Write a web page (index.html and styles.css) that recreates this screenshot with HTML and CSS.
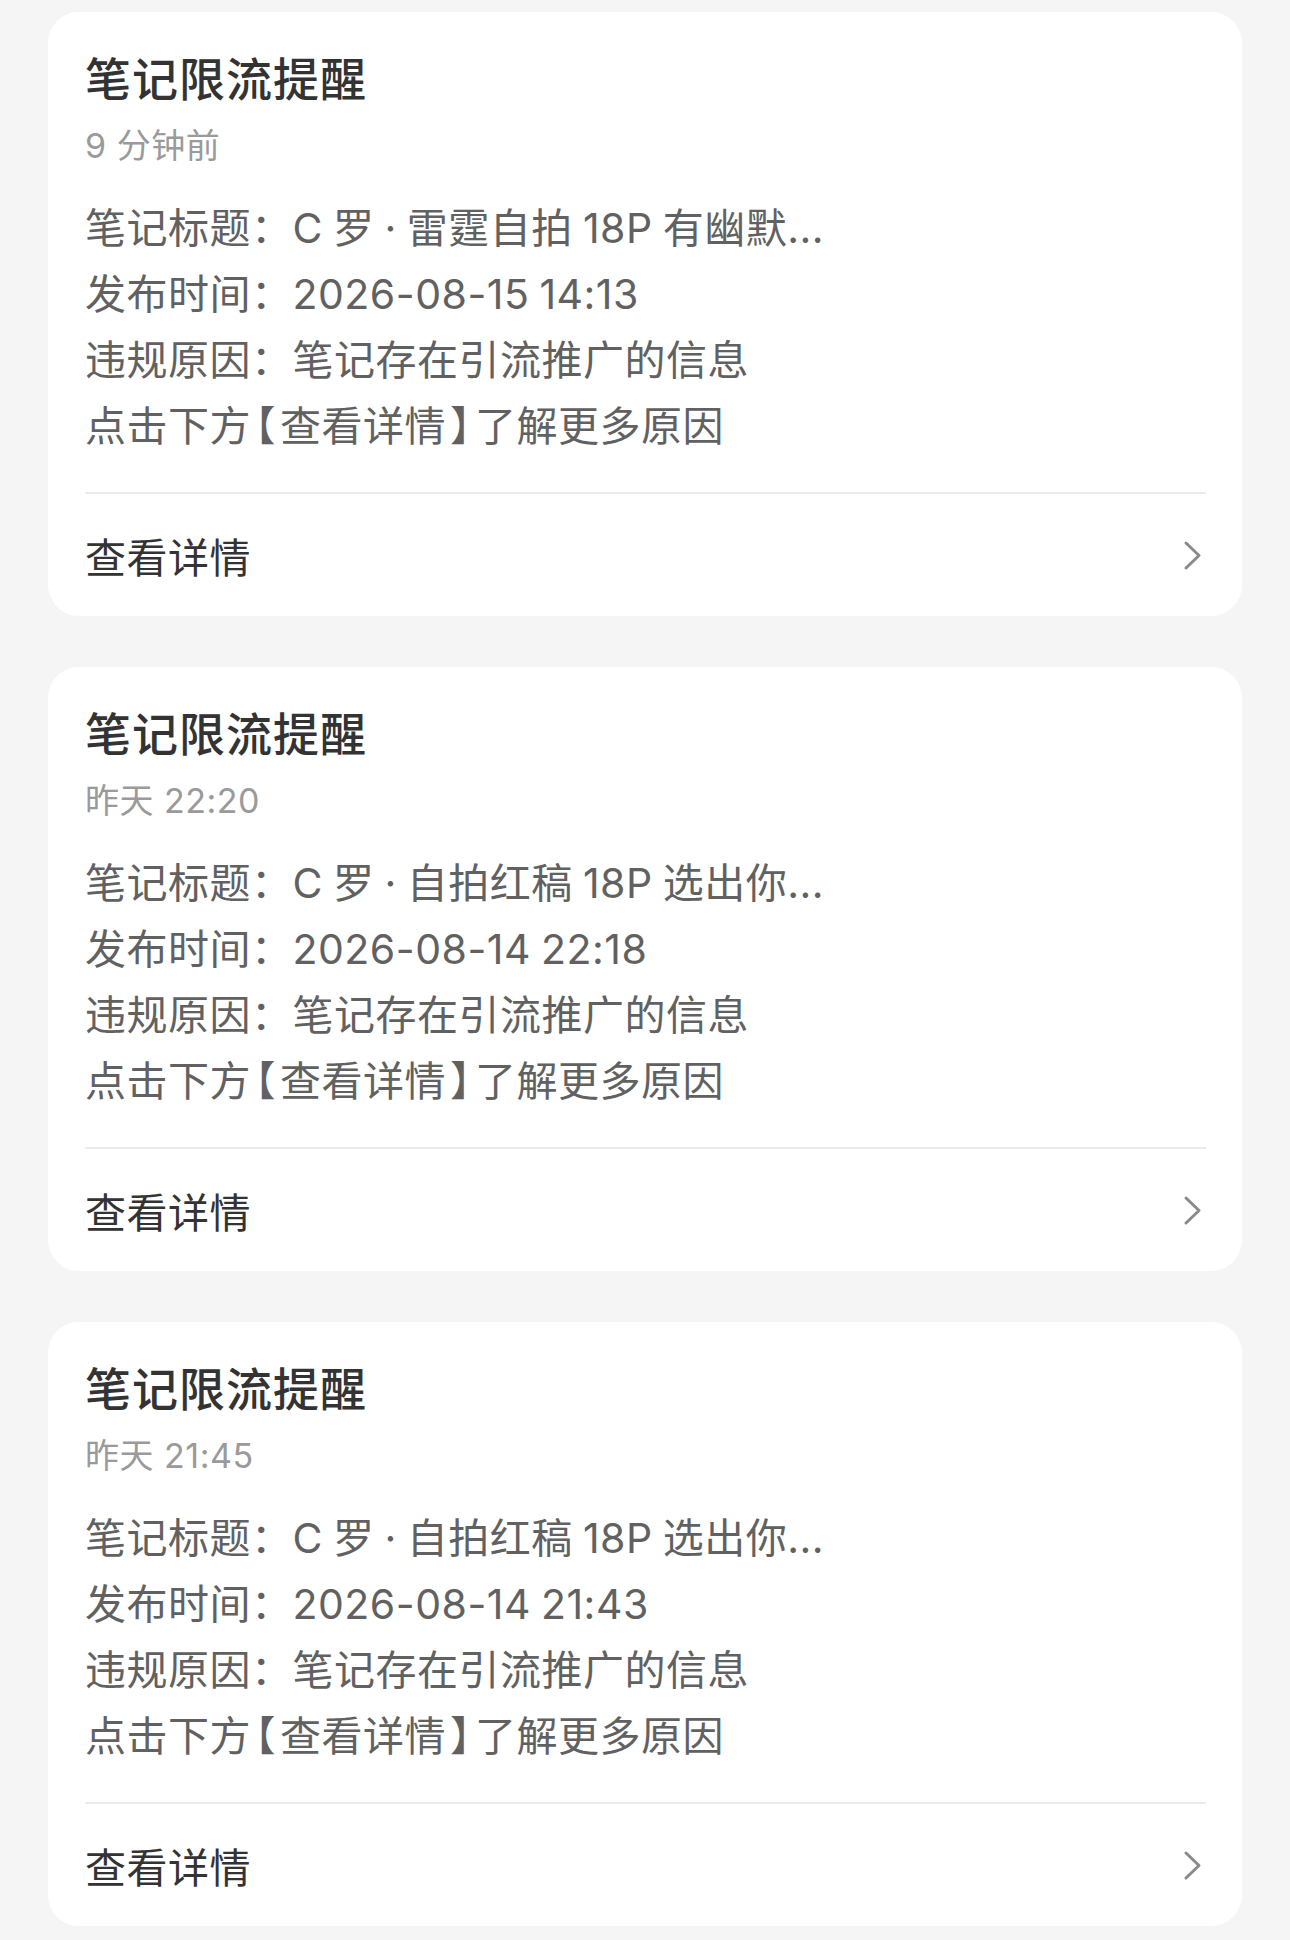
FILE: index.html
```html
<!DOCTYPE html>
<html lang="zh-CN">
<head>
<meta charset="utf-8">
<title>通知</title>
<link rel="stylesheet" href="styles.css">
</head>
<body>
<main class="list">
  <section class="card">
    <h2 class="title">笔记限流提醒</h2>
    <div class="time">9 分钟前</div>
    <div class="body">
      <p class="line">笔记标题：C 罗 · 雷霆自拍 18P 有幽默...</p>
      <p class="line">发布时间：2026-08-15 14:13</p>
      <p class="line">违规原因：笔记存在引流推广的信息</p>
      <p class="line">点击下方<span class="br">【</span>查看详情<span class="br">】</span>了解更多原因</p>
    </div>
    <div class="divider"></div>
    <a class="detail" href="#">
      <span>查看详情</span>
      <svg class="chev" viewBox="0 0 19 31" width="19" height="31"><polyline points="3,3 16,15.5 3,28" fill="none" stroke="#8a8a8a" stroke-width="3" stroke-linecap="round" stroke-linejoin="round"/></svg>
    </a>
  </section>
  <section class="card">
    <h2 class="title">笔记限流提醒</h2>
    <div class="time">昨天 22:20</div>
    <div class="body">
      <p class="line">笔记标题：C 罗 · 自拍红稿 18P 选出你...</p>
      <p class="line">发布时间：2026-08-14 22:18</p>
      <p class="line">违规原因：笔记存在引流推广的信息</p>
      <p class="line">点击下方<span class="br">【</span>查看详情<span class="br">】</span>了解更多原因</p>
    </div>
    <div class="divider"></div>
    <a class="detail" href="#">
      <span>查看详情</span>
      <svg class="chev" viewBox="0 0 19 31" width="19" height="31"><polyline points="3,3 16,15.5 3,28" fill="none" stroke="#8a8a8a" stroke-width="3" stroke-linecap="round" stroke-linejoin="round"/></svg>
    </a>
  </section>
  <section class="card">
    <h2 class="title">笔记限流提醒</h2>
    <div class="time">昨天 21:45</div>
    <div class="body">
      <p class="line">笔记标题：C 罗 · 自拍红稿 18P 选出你...</p>
      <p class="line">发布时间：2026-08-14 21:43</p>
      <p class="line">违规原因：笔记存在引流推广的信息</p>
      <p class="line">点击下方<span class="br">【</span>查看详情<span class="br">】</span>了解更多原因</p>
    </div>
    <div class="divider"></div>
    <a class="detail" href="#">
      <span>查看详情</span>
      <svg class="chev" viewBox="0 0 19 31" width="19" height="31"><polyline points="3,3 16,15.5 3,28" fill="none" stroke="#8a8a8a" stroke-width="3" stroke-linecap="round" stroke-linejoin="round"/></svg>
    </a>
  </section>
</main>
</body>
</html>
```
FILE: styles.css
```css
html, body {
  margin: 0;
  padding: 0;
  background: #f5f5f5;
}
body {
  font-family: "Inter", "Noto Sans CJK SC", "Noto Sans", sans-serif;
  width: 1290px;
  min-height: 1940px;
}
.list {
  display: flex;
  flex-direction: column;
  gap: 51px;
  padding: 12px 48px 15px 48px;
}
.card {
  background: #ffffff;
  border-radius: 31px;
  padding: 37px 36px 0 37px;
  height: 604px;
  box-sizing: border-box;
  display: flex;
  flex-direction: column;
}
.title {
  margin: 0;
  font-size: 46px;
  line-height: 60px;
  font-weight: 500;
  color: #333333;
  letter-spacing: 1px;
}
.time {
  margin-top: 15px;
  font-size: 34px;
  line-height: 44px;
  color: #9a9a9a;
  letter-spacing: 0.5px;
}
.body {
  margin-top: 27px;
}
.line {
  margin: 0;
  font-size: 41px;
  line-height: 66px;
  color: #616161;
  letter-spacing: 0.5px;
  word-spacing: -2px;
  white-space: nowrap;
}
.br {
  font-feature-settings: "halt";
  margin: 0 4px;
}
.divider {
  margin-top: 33px;
  height: 2px;
  background: #ebebeb;
}
.detail {
  flex: 1;
  display: flex;
  align-items: center;
  justify-content: space-between;
  text-decoration: none;
  font-size: 41px;
  color: #333333;
  letter-spacing: 0.5px;
  padding-right: 4px;
}
.chev {
  display: block;
}
```
